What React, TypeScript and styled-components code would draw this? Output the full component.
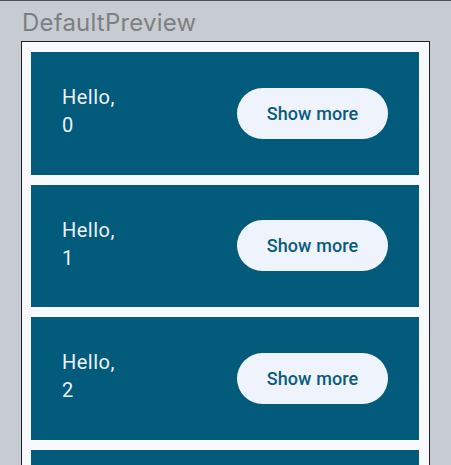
import React from "react";
import styled, { createGlobalStyle } from "styled-components";

const Global = createGlobalStyle`
  html, body {
    margin: 0;
    padding: 0;
    background: #c6ccd2;
    overflow: hidden;
  }
  #root {
    height: 465px;
    overflow: hidden;
  }
`;

const Page = styled.div`
  height: 465px;
  border-top: 1px solid #4e4f51;
  box-sizing: border-box;
  overflow: hidden;
`;

const Title = styled.div`
  margin: 8px 0 4px 22px;
  font-family: Inter, "Liberation Sans", Arial, sans-serif;
  font-size: 24px;
  line-height: 28px;
  letter-spacing: 0.2px;
  color: #7e7f81;
`;

const Frame = styled.div`
  margin-left: 21px;
  width: 409px;
  box-sizing: border-box;
  border: 1px solid #1f2022;
  border-bottom: none;
  background: #f8f9fc;
  padding: 10px 10px 0 9px;
  display: flex;
  flex-direction: column;
  gap: 10px;
`;

const Card = styled.div`
  height: 122.5px;
  flex: none;
  background: #035b7b;
  display: flex;
  align-items: center;
  justify-content: space-between;
  padding: 0 31px;
`;

const Greeting = styled.div`
  display: flex;
  flex-direction: column;
  font-family: Roboto, "Noto Sans", sans-serif;
  font-size: 20px;
  line-height: 28px;
  letter-spacing: 0.5px;
  color: #eef2f9;
  margin-bottom: 4px;
`;

const ShowMore = styled.button`
  width: 151px;
  height: 51px;
  border: none;
  border-radius: 26px;
  background: #eef3fc;
  color: #0b5b7b;
  font-family: Roboto, "Noto Sans", sans-serif;
  font-weight: 500;
  font-size: 18px;
  letter-spacing: 0.1px;
  padding: 0;
  cursor: pointer;
`;

const names = [0, 1, 2];

export default function App() {
  return (
    <>
      <Global />
      <Page>
        <Title>DefaultPreview</Title>
        <Frame>
          {names.map((n) => (
            <Card key={n}>
              <Greeting>
                <span>Hello,</span>
                <span>{n}</span>
              </Greeting>
              <ShowMore>Show more</ShowMore>
            </Card>
          ))}
          <Card />
        </Frame>
      </Page>
    </>
  );
}
